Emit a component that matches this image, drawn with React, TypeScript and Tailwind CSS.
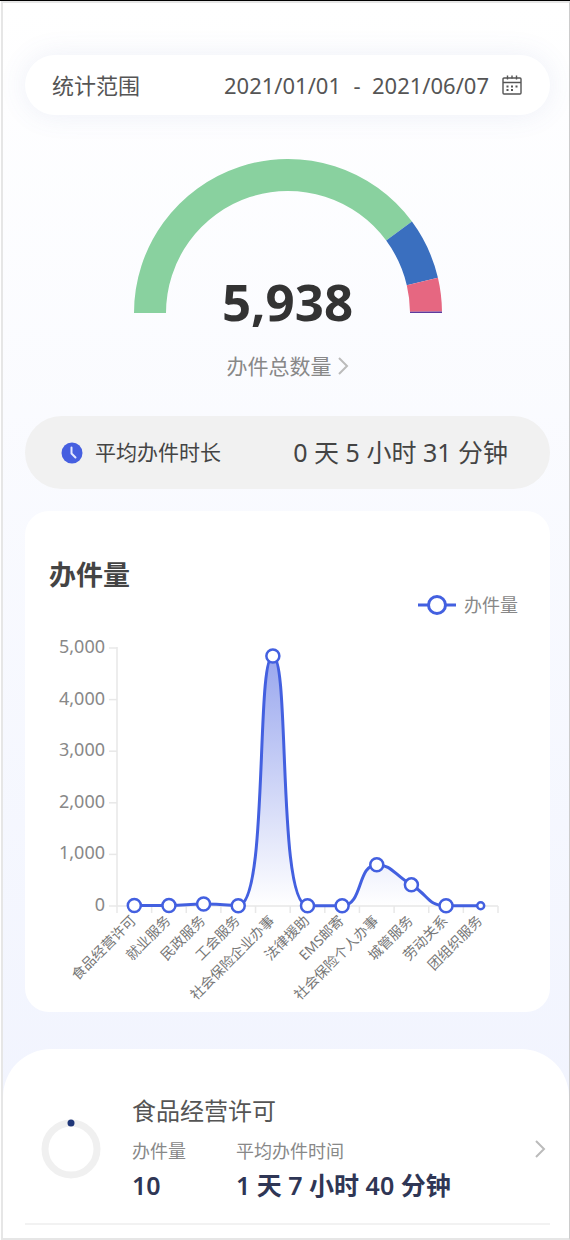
import { useState } from 'react';

type Point = { x: number; y: number };

const services = [
  { name: '食品经营许可', count: 10 },
  { name: '就业服务', count: 8 },
  { name: '民政服务', count: 40 },
  { name: '工会服务', count: 4 },
  { name: '社会保险企业办事', count: 4845 },
  { name: '法律援助', count: 5 },
  { name: 'EMS邮寄', count: 5 },
  { name: '社会保险个人办事', count: 800 },
  { name: '城管服务', count: 410 },
  { name: '劳动关系', count: 6 },
  { name: '团组织服务', count: 5 },
];

const records = [{ name: '食品经营许可', count: '10', duration: '1 天 7 小时 40 分钟' }];

// Angles run clockwise from the left end (0) to the right end (180)
const gaugeSegments = [
  { from: 0, to: 143.6, color: '#89d19f' },
  { from: 143.6, to: 166.8, color: '#3a6fbf' },
  { from: 166.8, to: 179.4, color: '#e66781' },
  { from: 179.4, to: 180, color: '#5c3a9e' },
];

function gaugePath(from: number, to: number) {
  const outer = 154;
  const inner = 122;
  const at = (r: number, deg: number) => {
    const a = (deg * Math.PI) / 180;
    return `${154 - r * Math.cos(a)} ${154 - r * Math.sin(a)}`;
  };
  return `M${at(outer, from)} A${outer} ${outer} 0 0 1 ${at(outer, to)} L${at(inner, to)} A${inner} ${inner} 0 0 0 ${at(inner, from)} Z`;
}

const clamp = (v: number, a: number, b: number) => Math.min(Math.max(v, Math.min(a, b)), Math.max(a, b));

// Smooth curve whose handles never overshoot the neighbouring points
function smoothPath(points: Point[]) {
  let d = `M${points[0].x} ${points[0].y}`;
  let handle = points[0];
  for (let i = 1; i < points.length; i++) {
    const prev = points[i - 1];
    const cur = points[i];
    const next = points[i + 1];
    let before = cur;
    let after = cur;
    if (next) {
      const lenPrev = Math.hypot(cur.x - prev.x, cur.y - prev.y);
      const lenNext = Math.hypot(next.x - cur.x, next.y - cur.y);
      const k = (0.5 * lenNext) / (lenNext + lenPrev);
      const ax = clamp(cur.x + (next.x - prev.x) * k, cur.x, next.x);
      const ay = clamp(cur.y + (next.y - prev.y) * k, cur.y, next.y);
      before = {
        x: clamp(cur.x - ((ax - cur.x) * lenPrev) / lenNext, prev.x, cur.x),
        y: clamp(cur.y - ((ay - cur.y) * lenPrev) / lenNext, prev.y, cur.y),
      };
      after = {
        x: cur.x + ((cur.x - before.x) * lenNext) / lenPrev,
        y: cur.y + ((cur.y - before.y) * lenNext) / lenPrev,
      };
    }
    d += ` C${handle.x} ${handle.y} ${before.x} ${before.y} ${cur.x} ${cur.y}`;
    handle = after;
  }
  return d;
}

function CalendarIcon() {
  return (
    <svg viewBox="0 0 20 20" className="w-5 h-5" fill="none" stroke="#555" strokeWidth="1.4">
      <rect x="1" y="3" width="18" height="16" rx="1" />
      <path d="M1 7.5h18M5.5 0.5v4M14.5 0.5v4M10 0.5v3" />
      <path d="M4.5 11.5h2M9 11.5h2M13.5 11.5h2M4.5 15h2M9 15h2" strokeWidth="1.8" />
    </svg>
  );
}

function ClockIcon() {
  return (
    <svg viewBox="0 0 22 22" className="w-[22px] h-[22px]">
      <circle cx="11" cy="11" r="10.5" fill="#465fe0" />
      <path d="M10.5 5.5v6l4 4" fill="none" stroke="#e4e8ff" strokeWidth="2" strokeLinecap="round" strokeLinejoin="round" />
    </svg>
  );
}

function ArrowIcon() {
  return (
    <svg viewBox="0 0 11 18" className="w-[11px] h-[18px]" fill="none" stroke="#bbb" strokeWidth="2">
      <path d="M1 1l8 8-8 8" />
    </svg>
  );
}

function Gauge() {
  return (
    <div className="flex flex-col items-center mt-11">
      <svg viewBox="0 0 308 154" className="w-[308px]">
        {gaugeSegments.map((s) => (
          <path key={s.color} d={gaugePath(s.from, s.to)} fill={s.color} />
        ))}
        <path d="M276 153.5h32" stroke="#5c3a9e" />
      </svg>
      <div className="-mt-[38px] text-[51px] leading-[52px] font-bold text-[#333]">5,938</div>
      <a href="#total" className="flex items-center gap-[6px] mt-[27px] text-[21px] leading-6 text-[#888]">
        办件总数量
        <ArrowIcon />
      </a>
    </div>
  );
}

function ServiceChart() {
  const left = 92;
  const right = 473;
  const base = 291;
  const top = 33;
  const step = (right - left) / services.length;
  const points = services.map((s, i) => ({
    x: left + step * (i + 0.5),
    y: base - (s.count / 5000) * (base - top),
  }));
  const line = smoothPath(points);
  const last = points.length - 1;

  return (
    <svg viewBox="0 0 525 397" className="block w-full">
      <defs>
        <linearGradient id="area" gradientUnits="userSpaceOnUse" x1="0" y1={points[4].y} x2="0" y2={base}>
          <stop offset="0" stopColor="#465fe0" stopOpacity="0.55" />
          <stop offset="1" stopColor="#465fe0" stopOpacity="0" />
        </linearGradient>
      </defs>

      {/* Axes */}
      <g stroke="#e8e8e8" strokeWidth="1.5">
        <path d={`M${left} ${top - 1}V${base}H${right}`} fill="none" />
        {[0, 1, 2, 3, 4, 5].map((n) => (
          <path key={n} d={`M${left - 8} ${base - (n * (base - top)) / 5}h8`} />
        ))}
        {[...services, null].map((_, i) => (
          <path key={i} d={`M${left + step * i} ${base}v7`} />
        ))}
      </g>
      <g fill="#888" fontSize="18" textAnchor="end">
        {[0, 1, 2, 3, 4, 5].map((n) => (
          <text key={n} x={80} y={base + 5 - (n * (base - top)) / 5}>
            {(n * 1000).toLocaleString('en-US')}
          </text>
        ))}
      </g>

      {/* Series */}
      <path d={`${line} V${base} H${points[0].x} Z`} fill="url(#area)" />
      <path d={line} fill="none" stroke="#4360e0" strokeWidth="3" />
      {points.map((p, i) => (
        <circle key={i} cx={p.x} cy={p.y} r={i === last ? 3.5 : 6.5} fill="#fff" stroke="#4360e0" strokeWidth="2.5" />
      ))}

      {/* Category labels */}
      <g fill="#777" fontSize="14" textAnchor="end">
        {services.map((s, i) => (
          <text key={s.name} transform={`translate(${points[i].x - 1} ${base + 12}) rotate(-45)`} y="5">
            {s.name}
          </text>
        ))}
      </g>
    </svg>
  );
}

export default function App() {
  const [startDate, setStartDate] = useState('2021/01/01');
  const [endDate, setEndDate] = useState('2021/06/07');

  return (
    <div className="min-h-screen border-t border-black bg-white pl-px font-['Noto_Sans','Noto_Sans_CJK_SC',sans-serif]">
      <div className="border-2 border-r border-[#e6e6e6] border-r-[#ccc] bg-linear-to-b from-white to-[#f0f3fe]">
        <div className="pt-[52px] pl-[22px] pr-[19px]">
          {/* Date range */}
          <div className="flex items-center justify-between h-[60px] pl-[27px] pr-7 rounded-full bg-white shadow-[0_0_28px_rgba(90,110,180,0.1)] text-[22px] text-[#555]">
            <label htmlFor="start">统计范围</label>
            <div className="flex items-center">
              <input
                id="start"
                value={startDate}
                onChange={(e) => setStartDate(e.target.value)}
                className="w-[118px] bg-transparent outline-none"
              />
              <span className="w-[30px] text-center">-</span>
              <input
                aria-label="结束日期"
                value={endDate}
                onChange={(e) => setEndDate(e.target.value)}
                className="w-[118px] bg-transparent outline-none"
              />
              <button aria-label="选择日期" className="ml-3">
                <CalendarIcon />
              </button>
            </div>
          </div>

          <Gauge />

          {/* Average duration */}
          <div className="flex items-center justify-between h-[73px] mt-[38px] pl-9 pr-[42px] rounded-full bg-[#f1f1f1] text-[#444]">
            <div className="flex items-center gap-3 text-[21px]">
              <ClockIcon />
              平均办件时长
            </div>
            <div className="text-[25px]">0 天 5 小时 31 分钟</div>
          </div>

          {/* Chart card */}
          <section className="mt-[22px] pt-11 rounded-[24px] bg-white">
            <h2 className="pl-6 text-[27px] leading-10 font-bold text-[#444]">办件量</h2>
            <div className="flex justify-end pr-8">
              <button className="flex items-center gap-2 h-5 text-[18px] text-[#888]">
                <svg viewBox="0 0 38 20" className="w-[38px] h-5" fill="#fff" stroke="#4360e0" strokeWidth="3">
                  <path d="M0 10h38" />
                  <circle cx="19" cy="10" r="8.5" />
                </svg>
                办件量
              </button>
            </div>
            <ServiceChart />
          </section>
        </div>

        {/* Records */}
        <section className="mt-[37px] pt-[46px] pb-[13px] pl-[22px] pr-[19px] rounded-t-[48px] bg-white">
          {records.map((r) => (
            <a key={r.name} href="#record" className="flex items-center pb-5 pl-4 pr-1 border-b-2 border-[#f2f2f2]">
              <svg viewBox="0 0 60 60" className="w-[60px] h-[60px]" fill="none">
                <circle cx="30" cy="30" r="26" stroke="#f0f0f0" strokeWidth="7" />
                <circle cx="30" cy="4" r="3.5" fill="#1f3678" />
              </svg>
              <div className="flex-1 ml-[31px]">
                <div className="text-[24px] leading-8 text-[#555]">{r.name}</div>
                <dl className="flex gap-[50px] mt-3">
                  <div>
                    <dt className="text-[18px] leading-6 text-[#888]">办件量</dt>
                    <dd className="mt-1 text-[25px] leading-9 font-semibold text-[#2f3655]">{r.count}</dd>
                  </div>
                  <div>
                    <dt className="text-[18px] leading-6 text-[#888]">平均办件时间</dt>
                    <dd className="mt-1 text-[25px] leading-9 font-semibold text-[#2f3655]">{r.duration}</dd>
                  </div>
                </dl>
              </div>
              <ArrowIcon />
            </a>
          ))}
        </section>
      </div>
    </div>
  );
}
